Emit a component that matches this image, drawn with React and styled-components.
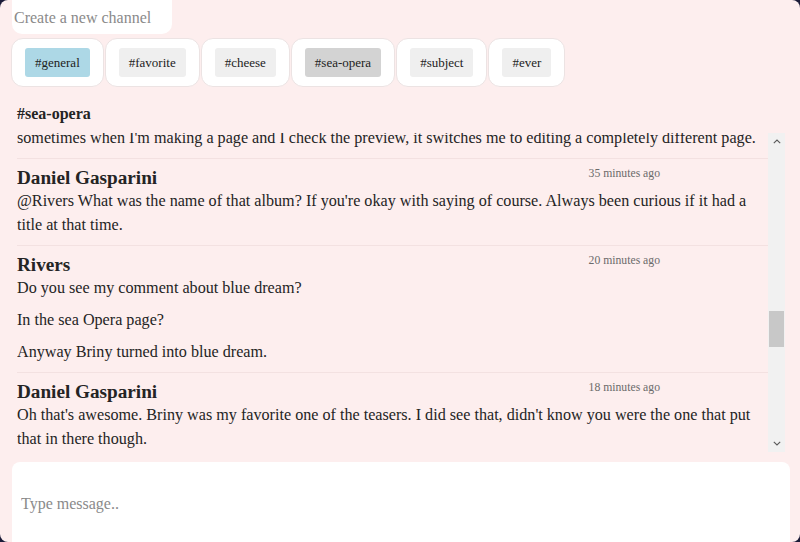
import React, { useLayoutEffect, useRef, useState } from "react";
import styled, { createGlobalStyle } from "styled-components";

const GlobalStyle = createGlobalStyle`
  html {
    background: #1b1b38;
  }
  body {
    margin: 0;
    height: 542px;
    overflow: hidden;
    border-radius: 8px;
    background: #fdeeee;
    font-family: "Liberation Serif", "Times New Roman", serif;
    color: #242424;
  }
  * {
    box-sizing: border-box;
  }
`;

const channels = [
  { name: "general", primary: true },
  { name: "favorite" },
  { name: "cheese" },
  { name: "sea-opera" },
  { name: "subject" },
  { name: "ever" },
];

const messages = [
  { id: 1, author: "Rivers", time: "4 hours ago", text: ["Testing, testing."] },
  { id: 2, author: "Daniel Gasparini", time: "4 hours ago", text: ["It works!"] },
  { id: 3, author: "Rivers", time: "4 hours ago", text: ["Great, I'll invite the others later."] },
  { id: 4, author: "Rivers", time: "3 hours ago", text: ["Hey everyone, welcome to the sea-opera channel.", "This is where we can talk about the new pages and the teasers."] },
  { id: 5, author: "Daniel Gasparini", time: "3 hours ago", text: ["Thanks for setting this up. I've been wanting a place to talk about the album art."] },
  { id: 6, author: "Rivers", time: "3 hours ago", text: ["Of course. I'll be posting the updated track list here once it's done.", "It might take a few days though."] },
  { id: 7, author: "Daniel Gasparini", time: "2 hours ago", text: ["No worries. Are the old demos still going to be on there?"] },
  { id: 8, author: "Rivers", time: "2 hours ago", text: ["Some of them. A couple got cut.", "I'll probably put the rest on a separate page."] },
  { id: 9, author: "Daniel Gasparini", time: "2 hours ago", text: ["Sounds good. Is the sea Opera page going to stay up after the release?"] },
  { id: 10, author: "Rivers", time: "2 hours ago", text: ["Yeah, I think so. It might move to a different section though.", "Still working out where everything goes."] },
  { id: 11, author: "Daniel Gasparini", time: "an hour ago", text: ["Makes sense. The new layout looks really clean by the way."] },
  { id: 12, author: "Rivers", time: "an hour ago", text: ["Thanks! It took a while to get the colors right."] },
  { id: 13, author: "Daniel Gasparini", time: "an hour ago", text: ["Did you ever finish the cover for the second teaser?"] },
  { id: 14, author: "Rivers", time: "an hour ago", text: ["Almost. I'm just waiting on a couple of photos.", "Should be up by the end of the week."] },
  { id: 15, author: "Daniel Gasparini", time: "an hour ago", text: ["Nice, can't wait to see it. The first one was great."] },
  { id: 16, author: "Rivers", time: "an hour ago", text: ["Appreciate it. I had a lot of fun making that one."] },
  { id: 17, author: "Daniel Gasparini", time: "50 minutes ago", text: ["Have you noticed the editor acting weird lately?", "Mine has been freezing every now and then."] },
  { id: 18, author: "Rivers", time: "45 minutes ago", text: ["Mine too, it's been pretty annoying."] },
  { id: 19, author: "Daniel Gasparini", time: "42 minutes ago", text: ["Does it lose your changes as well?"] },
  { id: 20, author: "Rivers", time: "40 minutes ago", anchor: true, text: ["A little bit, yeah. It keeps losing my changes when I switch tabs.", "sometimes when I'm making a page and I check the preview, it switches me to editing a completely different page."] },
  { id: 21, author: "Daniel Gasparini", time: "35 minutes ago", text: ["@Rivers What was the name of that album? If you're okay with saying of course. Always been curious if it had a title at that time."] },
  { id: 22, author: "Rivers", time: "20 minutes ago", text: ["Do you see my comment about blue dream?", "In the sea Opera page?", "Anyway Briny turned into blue dream."] },
  { id: 23, author: "Daniel Gasparini", time: "18 minutes ago", text: ["Oh that's awesome. Briny was my favorite one of the teasers. I did see that, didn't know you were the one that put that in there though."] },
  { id: 24, author: "Rivers", time: "15 minutes ago", text: ["Haha yeah, that was me. I thought it fit the mood of the page."] },
  { id: 25, author: "Daniel Gasparini", time: "14 minutes ago", text: ["It definitely does. Are you going to keep the name?"] },
  { id: 26, author: "Rivers", time: "12 minutes ago", text: ["Probably. Blue dream just sounds right.", "I might change the artwork a little though."] },
  { id: 27, author: "Daniel Gasparini", time: "10 minutes ago", text: ["Let me know if you need help with that. I have some old sketches that could work."] },
  { id: 28, author: "Rivers", time: "8 minutes ago", text: ["That would be awesome, send them over whenever."] },
  { id: 29, author: "Daniel Gasparini", time: "6 minutes ago", text: ["Will do. I'll scan them tonight.", "Some of them are pretty rough though."] },
  { id: 30, author: "Rivers", time: "5 minutes ago", text: ["That's fine, rough is good."] },
  { id: 31, author: "Daniel Gasparini", time: "4 minutes ago", text: ["Haha okay."] },
  { id: 32, author: "Rivers", time: "3 minutes ago", text: ["Also, the album never really got a title. I forgot to answer earlier.", "We just called it the sea record."] },
  { id: 33, author: "Daniel Gasparini", time: "2 minutes ago", text: ["Ha, that works. Thanks for telling me."] },
  { id: 34, author: "Rivers", time: "a few seconds ago", text: ["No problem. Talk later!"] },
];

function Chevron({ down }) {
  return (
    <svg width="8" height="5" viewBox="0 0 8 5">
      <polyline
        points={down ? "0.8,0.8 4,4 7.2,0.8" : "0.8,4.2 4,1 7.2,4.2"}
        fill="none"
        stroke="#5a5a5a"
        strokeWidth="1.1"
      />
    </svg>
  );
}

function App() {
  const listRef = useRef(null);
  const anchorRef = useRef(null);
  const trackRef = useRef(null);
  const [thumb, setThumb] = useState({ top: 0, height: 30 });

  // SCROLL SO THE 35 MINUTES MESSAGE SITS NEAR THE TOP, THEN PLACE THE THUMB
  useLayoutEffect(() => {
    const list = listRef.current;
    const anchor = anchorRef.current;
    const track = trackRef.current;
    if (!list || !anchor || !track) return;
    list.scrollTop = anchor.offsetTop + anchor.offsetHeight - 26;
    const trackHeight = track.clientHeight;
    const height = Math.max(
      20,
      (trackHeight * list.clientHeight) / list.scrollHeight
    );
    const ratio = list.scrollTop / (list.scrollHeight - list.clientHeight);
    setThumb({ top: (trackHeight - height) * ratio, height });
  }, []);

  return (
    <>
      <GlobalStyle />
      <Page>
        <ChannelInput placeholder="Create a new channel" />
        <ChannelRow>
          {channels.map((channel) => (
            <ChannelCard key={channel.name}>
              <ChannelButton
                $primary={channel.primary}
                $active={channel.name === "sea-opera"}
              >
                #{channel.name}
              </ChannelButton>
            </ChannelCard>
          ))}
        </ChannelRow>
        <ChannelTitle>#sea-opera</ChannelTitle>
        <ListFrame>
          <MessageList ref={listRef}>
            {messages.map((message) => (
              <Message key={message.id} ref={message.anchor ? anchorRef : null}>
                <MessageHeader>
                  <Author>{message.author}</Author>
                  <Time>{message.time}</Time>
                </MessageHeader>
                {message.text.map((line, i) => (
                  <Body key={i}>{line}</Body>
                ))}
              </Message>
            ))}
          </MessageList>
          <ScrollBar>
            <ScrollArrow>
              <Chevron />
            </ScrollArrow>
            <ScrollTrack ref={trackRef}>
              <ScrollThumb style={{ top: thumb.top, height: thumb.height }} />
            </ScrollTrack>
            <ScrollArrow>
              <Chevron down />
            </ScrollArrow>
          </ScrollBar>
        </ListFrame>
        <Composer placeholder="Type message.." />
      </Page>
    </>
  );
}

export default App;

const Page = styled.div`
  display: flex;
  flex-direction: column;
  padding: 0 10px 0 12px;

  & > * {
    flex: none;
  }
`;

const ChannelInput = styled.input`
  width: 160px;
  height: 34px;
  border: none;
  border-radius: 0 0 10px 10px;
  padding: 2px 2px 0;
  background: #fff;
  font-family: inherit;
  font-size: 16px;
  color: #222;
  outline: none;

  &::placeholder {
    color: #8a8a8a;
  }
`;

const ChannelRow = styled.div`
  display: flex;
  gap: 1px;
  margin: 4px 0 0 -1px;
`;

const ChannelCard = styled.div`
  background: #fff;
  border: 1px solid #ece3e3;
  border-radius: 12px;
  padding: 9px 13px;
`;

const ChannelButton = styled.button`
  border: none;
  border-radius: 3px;
  padding: 7px 10px;
  font-family: inherit;
  font-size: 13px;
  line-height: 15px;
  color: #222;
  background: ${(props) =>
    props.$active ? "#d3d3d3" : props.$primary ? "#add8e6" : "#efefef"};
`;

const ChannelTitle = styled.h2`
  margin: 18px 0 10px 5px;
  font-size: 16px;
  line-height: 18px;
  font-weight: bold;
`;

const ListFrame = styled.div`
  display: flex;
  height: 319px;
  margin: 0 5px;
`;

const MessageList = styled.div`
  flex: 1;
  min-width: 0;
  overflow-y: scroll;
  position: relative;
  scrollbar-width: none;

  &::-webkit-scrollbar {
    display: none;
  }
`;

const ScrollBar = styled.div`
  display: flex;
  flex-direction: column;
  width: 17px;
  background: #f1f1f1;
`;

const ScrollArrow = styled.div`
  display: flex;
  align-items: center;
  justify-content: center;
  height: 17px;
`;

const ScrollTrack = styled.div`
  position: relative;
  flex: 1;
`;

const ScrollThumb = styled.div`
  position: absolute;
  left: 1px;
  right: 1px;
  background: #c8c8c8;
`;

const Message = styled.div`
  padding: 8px 8px 8px 0;
  border-bottom: 1px solid #f3e1e1;
`;

const MessageHeader = styled.div`
  display: flex;
  align-items: flex-start;
  justify-content: space-between;
  padding-right: 100px;
`;

const Author = styled.span`
  font-size: 19.2px;
  line-height: 22px;
  font-weight: bold;
`;

const Time = styled.span`
  font-size: 11.7px;
  line-height: 14px;
  color: #6b6b6b;
`;

const Body = styled.p`
  margin: 0;
  font-size: 16.15px;
  line-height: 24px;

  & + & {
    margin-top: 8px;
  }
`;

const Composer = styled.input`
  width: 100%;
  height: 84px;
  margin-top: 10px;
  border: none;
  border-radius: 8px 8px 0 0;
  padding: 0 9px;
  background: #fff;
  font-family: inherit;
  font-size: 16px;
  color: #222;
  outline: none;

  &::placeholder {
    color: #8a8a8a;
  }
`;
